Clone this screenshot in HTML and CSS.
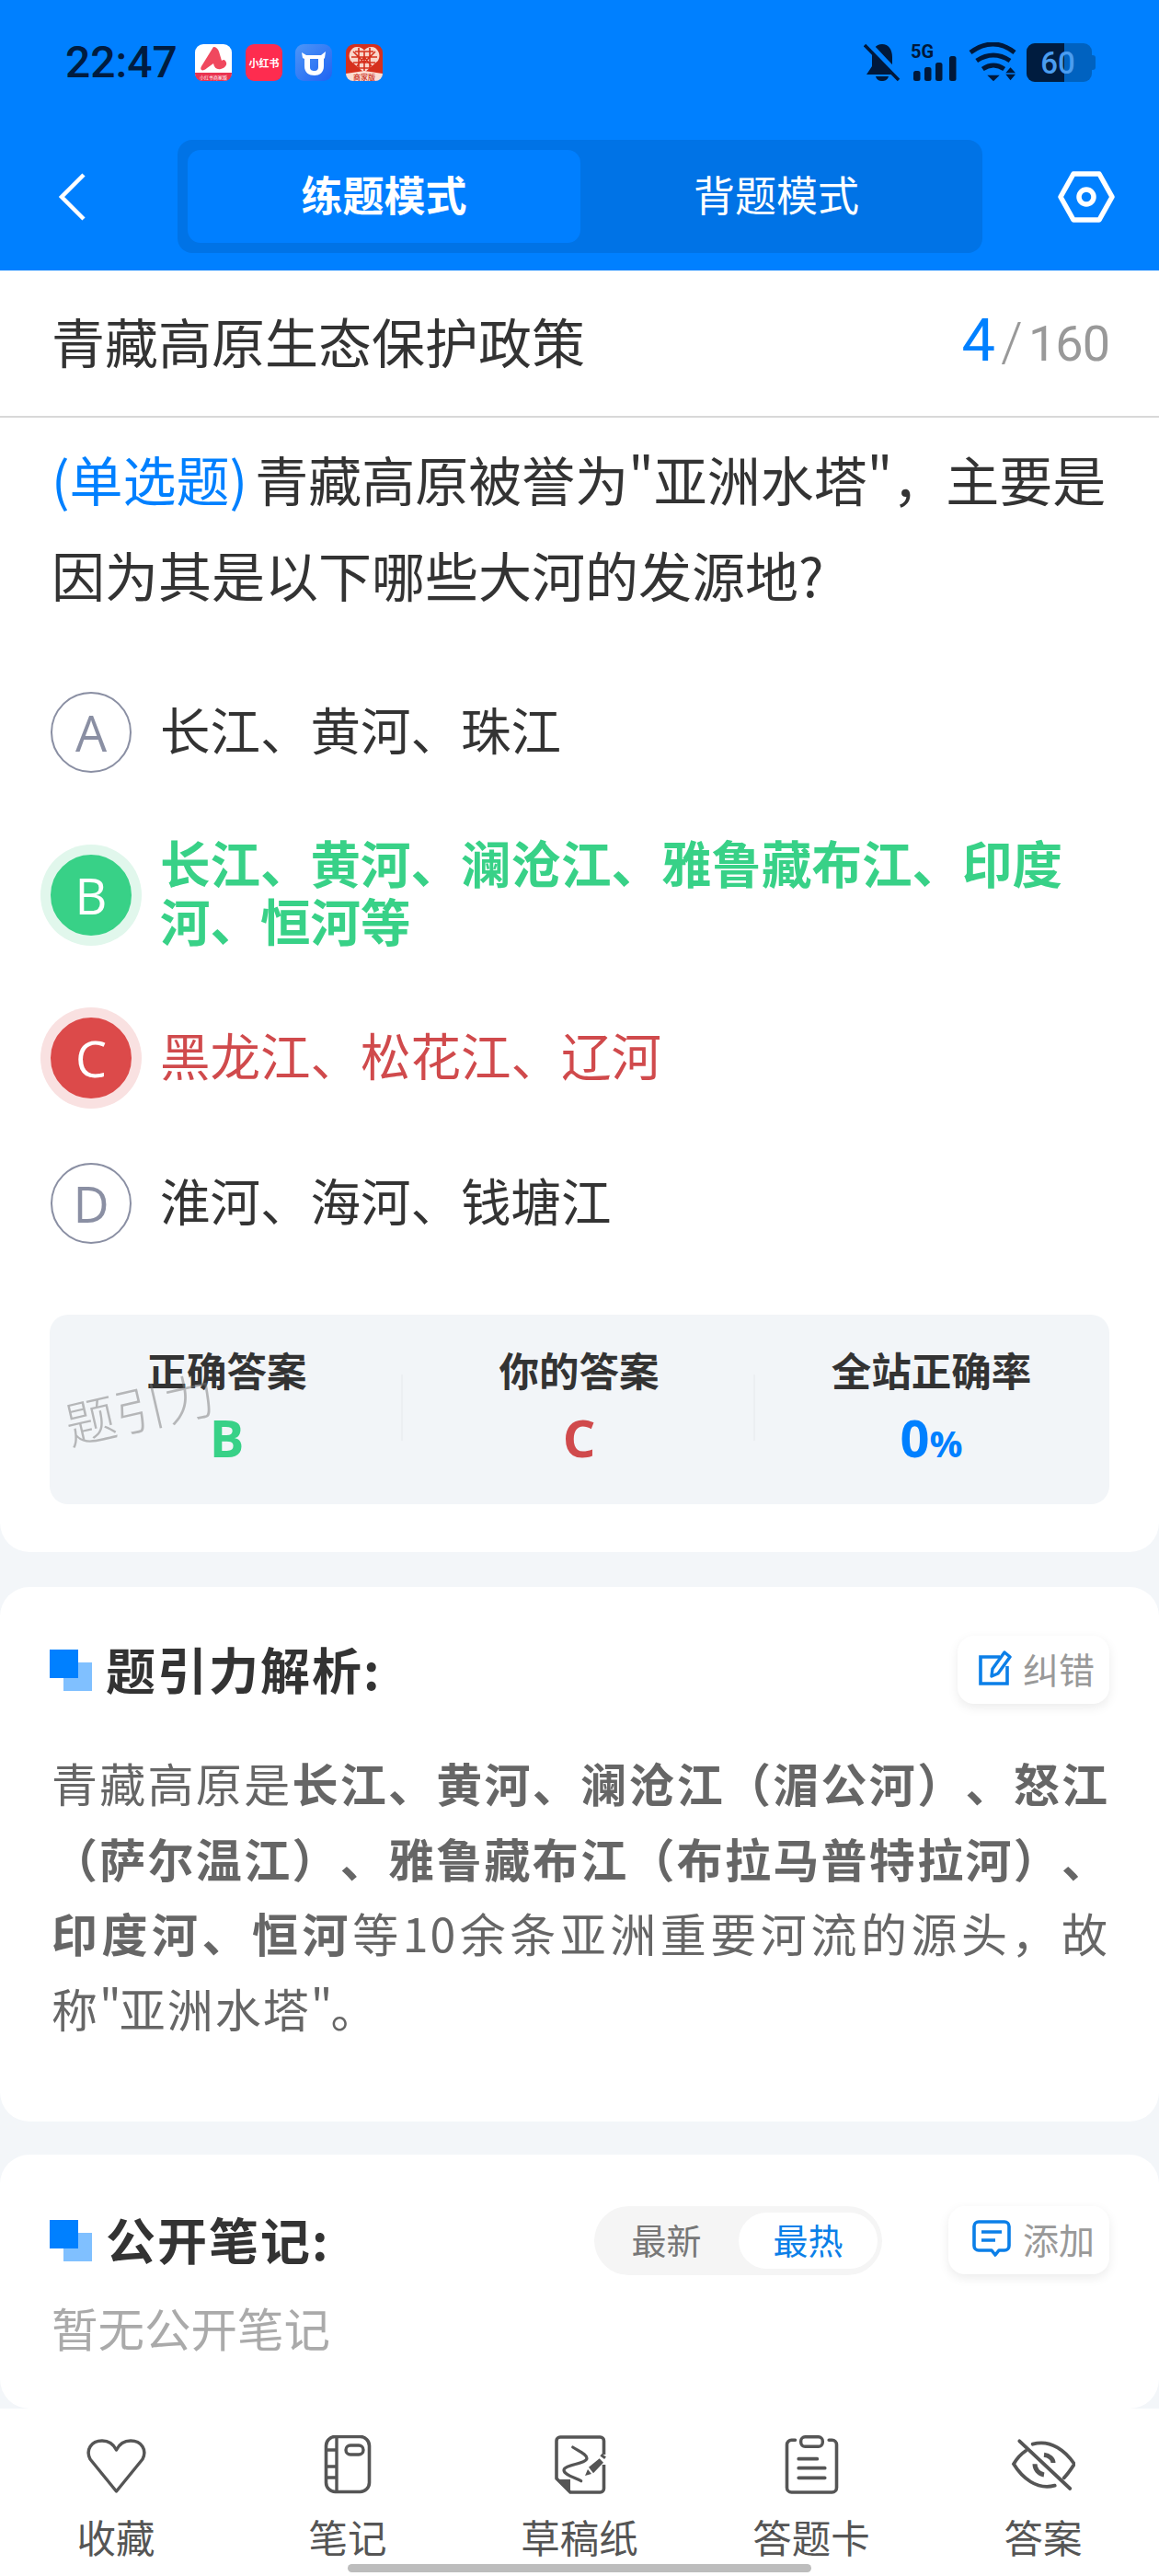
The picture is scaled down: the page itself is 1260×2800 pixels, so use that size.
FILE: index.html
```html
<!DOCTYPE html>
<html lang="zh-CN">
<head>
<meta charset="utf-8">
<title>题引力</title>
<link rel="stylesheet" href="styles.css">
</head>
<body>
<div class="page">
  <header class="top">
    <div class="status">
      <div class="status-left">
        <span class="time">22:47</span>
        <svg class="app" viewBox="0 0 40 40"><rect width="40" height="40" rx="9" fill="#fff"/><path d="M0 31H40V32a8 8 0 0 1-8 8H8a8 8 0 0 1-8-8Z" fill="#ea3350"/><path d="M20 3C23 3 25 5 26 8L29 18C31 16 33 17 34 20 35 23 32 26 28 27 24 28 21 26 20 21L13 26C11 28 8 29 7 28 6 27 6 26 7 24Z" fill="#f0485e"/><text x="20" y="38" class="app-tiny">小红书商家版</text></svg>
        <svg class="app" viewBox="0 0 40 40"><rect width="40" height="40" rx="9" fill="#fe2c4f"/><text x="20" y="24.5" class="app-label">小红书</text></svg>
        <svg class="app" viewBox="0 0 40 40"><defs><linearGradient id="oxbg" x1="0" y1="0" x2="1" y2="1"><stop offset="0" stop-color="#4d96f7"/><stop offset="1" stop-color="#1f63f2"/></linearGradient></defs><rect width="40" height="40" rx="9" fill="url(#oxbg)"/><path d="M7 9 12 12H28L33 8 32 15 31 16V24C31 31 26 34 21 34 15 34 10 31 10 24V16L8 15ZM16 16V25C16 28 18 29 21 29 24 29 25 27 25 25V16Z" fill="#fff" fill-rule="evenodd"/></svg>
        <svg class="app" viewBox="0 0 40 40"><rect width="40" height="40" rx="9" fill="#d6301d"/><path d="M20 31 5 18C1 11 6 3 12 3 16 3 19 5 20 7 21 5 24 3 28 3 34 3 39 11 35 18Z" fill="#f9d6cb"/><path d="M10 8H30M6 14H34M8 20H32M14 26H26M14 4V26M26 4V26M20 8V30M8 8 20 20 32 8M12 24 20 14 28 24" fill="none" stroke="#d6301d" stroke-width="1.6"/><path d="M0 32 20 29 40 32V32a8 8 0 0 1-8 8H8a8 8 0 0 1-8-8Z" fill="#fbdcd2"/><text x="20" y="38.5" class="app-tag">商家版</text></svg>
      </div>
      <div class="status-right">
        <svg class="ico-bell" viewBox="0 0 40 44"><path d="M20 2C27 2 31 8 31 16V26L37 35H3L9 26V16C9 8 13 2 20 2ZM13 37H27C26 41 23 42 20 42 17 42 14 41 13 37Z" fill="#00183a"/><path d="M5 1 40 38" stroke="#0080ff" stroke-width="6"/><path d="M1 3 38 41" stroke="#00183a" stroke-width="3.5"/></svg>
        <svg class="ico-signal" viewBox="0 0 52 44"><text x="0" y="17" class="sig-label">5G</text><rect x="3" y="31" width="7.5" height="11" rx="2.5" fill="#00183a"/><rect x="15" y="27" width="7.5" height="15" rx="2.5" fill="#00183a"/><rect x="27" y="22" width="7.5" height="20" rx="2.5" fill="#00183a"/><rect x="42" y="15" width="7.5" height="27" rx="2.5" fill="#00183a"/></svg>
        <svg class="ico-wifi" viewBox="0 0 54 44"><path d="M2 11Q27 -7 50 11M8.700 20Q27 8 45 20M15.300 29Q27 21 38.700 29" fill="none" stroke="#00183a" stroke-width="5"/><path d="M20.300 35.700H33.700L27 42.300Z" fill="#00183a"/><path d="M45.500 27.300 51 33.300H40.300ZM40.300 34.700H51L45.500 41.300Z" fill="#00183a"/></svg>
        <div class="battery"><span class="batt-fill"></span><span class="batt-num">60</span></div>
      </div>
    </div>
    <div class="nav">
      <svg class="back" viewBox="0 0 30 52"><path d="M28 2 4 26 28 50" fill="none" stroke="#fff" stroke-width="4.500"/></svg>
      <div class="seg">
        <div class="seg-item seg-on">练题模式</div>
        <div class="seg-item">背题模式</div>
      </div>
      <svg class="gear" viewBox="0 0 62 56"><path d="M17 3H45L59 28 45 53H17L3 28Z" fill="none" stroke="#fff" stroke-width="5.500" stroke-linejoin="round"/><circle cx="31" cy="28" r="8" fill="none" stroke="#fff" stroke-width="5.500"/></svg>
    </div>
  </header>

  <main class="main">
    <section class="card card-q">
      <div class="title-row">
        <h1 class="title">青藏高原生态保护政策</h1>
        <div class="count"><span class="count-now">4</span><span class="count-sep">/</span><span class="count-all">160</span></div>
      </div>
      <div class="q-body">
        <p class="question"><span class="q-type">(单选题)</span>青藏高原被誉为"亚洲水塔"，主要是因为其是以下哪些大河的发源地?</p>
        <div class="options">
          <div class="opt"><span class="letter">A</span><span class="opt-text">长江、黄河、珠江</span></div>
          <div class="opt opt-right"><span class="letter">B</span><span class="opt-text">长江、黄河、澜沧江、雅鲁藏布江、印度河、恒河等</span></div>
          <div class="opt opt-wrong"><span class="letter">C</span><span class="opt-text">黑龙江、松花江、辽河</span></div>
          <div class="opt"><span class="letter">D</span><span class="opt-text">淮河、海河、钱塘江</span></div>
        </div>
        <div class="stats">
          <div class="stat"><div class="stat-label">正确答案</div><div class="stat-val val-right">B</div></div>
          <div class="stat"><div class="stat-label">你的答案</div><div class="stat-val val-wrong">C</div></div>
          <div class="stat"><div class="stat-label">全站正确率</div><div class="stat-val val-rate">0<small>%</small></div></div>
          <div class="mark">题引力</div>
        </div>
      </div>
    </section>

    <section class="card card-a">
      <div class="sec-head">
        <span class="sec-ico"></span>
        <h2 class="sec-title">题引力解析:</h2>
        <div class="btn">
          <svg class="btn-ico" viewBox="0 0 36 40"><path d="M23 8H2V37H31V18" fill="none" stroke="#0b7fe8" stroke-width="3.600"/><path d="M14 29 15 21 28 3 34 8 21 26Z" fill="none" stroke="#0b7fe8" stroke-width="3.400" stroke-linejoin="round"/></svg>
          <span>纠错</span>
        </div>
      </div>
      <p class="analysis">青藏高原是<b>长江、黄河、澜沧江（湄公河）、怒江（萨尔温江）、雅鲁藏布江（布拉马普特拉河）、印度河、恒河</b>等10余条亚洲重要河流的源头，故称<span class="quote">"</span>亚洲水塔<span class="quote">"</span>。</p>
    </section>

    <section class="card card-n">
      <div class="sec-head">
        <span class="sec-ico"></span>
        <h2 class="sec-title">公开笔记:</h2>
        <div class="toggle"><span class="tog">最新</span><span class="tog tog-on">最热</span></div>
        <div class="btn btn-add">
          <svg class="btn-ico" viewBox="0 0 44 40"><path d="M8 2H36A5 5 0 0 1 41 7V28A5 5 0 0 1 36 33H30L26 38 22 33H8A5 5 0 0 1 3 28V7A5 5 0 0 1 8 2Z" fill="none" stroke="#0b7fe8" stroke-width="3.600" stroke-linejoin="round"/><path d="M11 13H33M11 22H26" stroke="#0b7fe8" stroke-width="3.600"/></svg>
          <span>添加</span>
        </div>
      </div>
      <p class="empty">暂无公开笔记</p>
    </section>
  </main>

  <footer class="tabs">
    <div class="tab">
      <svg class="tab-ico" viewBox="0 0 70 64"><path d="M35.500 61 7 26C2 16 8 6 20 6 28 6 33 11 35.500 16 38 11 43 6 51 6 63 6 69 16 64 26Z" fill="none" stroke="#555" stroke-width="3.400" stroke-linejoin="round"/></svg>
      <span>收藏</span>
    </div>
    <div class="tab">
      <svg class="tab-ico" viewBox="0 0 70 64"><rect x="11.500" y="1.500" width="47" height="60" rx="10" fill="none" stroke="#555" stroke-width="3.600"/><path d="M23 2V61M11 16H23M11 34H23M11 46H23" stroke="#555" stroke-width="3.400"/><rect x="33" y="11" width="19" height="10" rx="5" fill="none" stroke="#555" stroke-width="3.400"/></svg>
      <span>笔记</span>
    </div>
    <div class="tab">
      <svg class="tab-ico" viewBox="0 0 70 64"><path d="M61.500 21V6A4 4 0 0 0 57.500 2H14A4 4 0 0 0 10 6V47L25 62H57.500A4 4 0 0 0 61.500 58V32" fill="none" stroke="#555" stroke-width="3.600" stroke-linejoin="round"/><path d="M11 48H25V62Z" fill="#555"/><path d="M27.700 13C36 18 43 21 43 25 43 31 18 32 18 38 18 43 30 46 36.700 49.700" fill="none" stroke="#555" stroke-width="3.200" stroke-linecap="round"/><path d="M45 34.700 56.700 25.300 61 29.700 50 41.300ZM41 44 44 37 48 42Z" fill="#555"/><path d="M58.300 21.300 63 24.700" stroke="#555" stroke-width="3.200"/></svg>
      <span>草稿纸</span>
    </div>
    <div class="tab">
      <svg class="tab-ico" viewBox="0 0 70 64"><path d="M18 6.300H14A5 5 0 0 0 9 11.300V58A5 5 0 0 0 14 63H58A5 5 0 0 0 63 58V11.300A5 5 0 0 0 58 6.300H54.700" fill="none" stroke="#555" stroke-width="3.600" stroke-linecap="round" transform="translate(-.5 -1)"/><rect x="23.700" y="1.800" width="23.600" height="10.500" rx="4.500" fill="none" stroke="#555" stroke-width="3.400"/><path d="M21.300 25.700H41.300M21.300 35.700H49.700M21.300 46.300H49.700" stroke="#555" stroke-width="3.800" stroke-linecap="round"/></svg>
      <span>答题卡</span>
    </div>
    <div class="tab">
      <svg class="tab-ico" viewBox="0 0 70 64"><path d="M23.700 9.700C44 4 60 18 69 31.300 66 36 62 42 57.700 46.300M16 17C10 21 6 26 3 31.300 12 46 28 60 47.700 54.700" fill="none" stroke="#555" stroke-width="3.800" stroke-linecap="round"/><path d="M36 21.300C42 22 46 26 46 30M26 31.300C26 37 30 42 36 43" fill="none" stroke="#555" stroke-width="5"/><path d="M9.300 6.300 64.300 58" stroke="#555" stroke-width="3.800" stroke-linecap="round"/></svg>
      <span>答案</span>
    </div>
    <span class="home"></span>
  </footer>
</div>
</body>
</html>
```
FILE: styles.css
```css
* { box-sizing: border-box; }
html, body { margin: 0; padding: 0; }
body { font-family: "Noto Sans CJK SC", "Noto Sans", sans-serif; background: #f3f6f9; color: #333; text-spacing-trim: space-all; }
h1, h2, p { margin: 0; font-weight: normal; }
.page { width: 1260px; height: 2800px; display: flex; flex-direction: column; overflow: hidden; }

/* Header */
.top { height: 294px; background: #0080ff; flex: none; }
.status { height: 152px; padding: 46px 73px 0 71px; display: flex; justify-content: space-between; align-items: flex-start; }
.status-left { display: flex; align-items: center; height: 44px; }
.time { font-family: "Roboto", sans-serif; font-weight: 500; font-size: 48px; line-height: 44px; color: #001c40; width: 141px; }
.app { width: 40px; height: 40px; margin-right: 14.500px; }
.app-label { font-size: 11px; font-weight: 700; fill: #fff; text-anchor: middle; }
.app-tiny { font-size: 5px; fill: #fff; text-anchor: middle; }
.app-tag { font-size: 8px; font-weight: 500; fill: #c9301f; text-anchor: middle; }
.status-right { display: flex; align-items: flex-start; height: 44px; }
.ico-bell { width: 40px; height: 44px; }
.ico-signal { width: 52px; height: 44px; margin-left: 11px; }
.sig-label { font-family: "Roboto", sans-serif; font-size: 20px; font-weight: 700; fill: #00183a; }
.ico-wifi { width: 54px; height: 44px; margin-left: 11px; }
.battery { position: relative; width: 71px; height: 42px; margin-left: 9px; margin-top: 1px; border-radius: 9px; background: #0062c0; display: flex; align-items: center; justify-content: center; }
.batt-fill { position: absolute; left: 0; top: 0; bottom: 0; width: 41px; background: #001c3f; border-radius: 9px 0 0 9px; }
.batt-num { position: relative; font-family: "Roboto", sans-serif; font-size: 33px; font-weight: 500; color: #4a9df0; margin-right: 3px; }
.battery::after { content: ""; position: absolute; right: -4px; top: 13px; width: 4px; height: 16px; background: #0062c0; border-radius: 0 3px 3px 0; }
.nav { display: flex; align-items: center; padding: 0 48px 0 63px; height: 123px; }
.back { width: 30px; height: 52px; flex: none; }
.seg { margin-left: 100px; width: 875px; height: 123px; background: #0073e6; border-radius: 16px; padding: 11px; display: flex; flex: none; }
.seg-item { flex: 1; display: flex; align-items: center; justify-content: center; font-size: 45px; color: #fff; border-radius: 14px; padding-bottom: 6px; }
.seg-on { background: #007fff; font-weight: 700; flex: none; width: 427px; }
.gear { width: 62px; height: 56px; margin-left: 82px; flex: none; }

/* Main */
.main { flex: 1; min-height: 0; overflow: hidden; }
.card { background: #fff; border-radius: 32px; }
.card-q { border-radius: 0 0 32px 32px; height: 1393px; }
.card-a { margin-top: 38px; height: 581px; padding: 53px 54px 0 54px; }
.card-n { margin-top: 36px; height: 276px; padding: 56px 54px 0 54px; }

.title-row { height: 160px; padding: 0 54px 6px 56px; border-bottom: 2px solid #d8d8d8; display: flex; align-items: center; justify-content: space-between; }
.title { font-size: 58px; line-height: 1; color: #333; }
.count { display: flex; align-items: baseline; font-family: "Roboto", sans-serif; color: #999; }
.count-now { font-size: 65px; color: #0080ff; }
.count-sep { font-size: 60px; margin: 0 6px 0 6px; font-weight: 300; }
.count-all { font-size: 54px; letter-spacing: -1px; }

.q-body { padding: 14px 54px 0 54px; }
.question { font-size: 58px; line-height: 104px; color: #333; padding-left: 2px; }
.q-type { color: #0080ff; margin-right: 8px; }
.options { margin-top: 76px; display: flex; flex-direction: column; gap: 70px; }
.opt { display: flex; align-items: center; min-height: 88px; }
.letter { width: 88px; height: 88px; flex: none; border-radius: 50%; border: 2.500px solid #8a8fa3; color: #8a8fa3; display: flex; align-items: center; justify-content: center; font-family: "Open Sans", sans-serif; font-size: 54px; margin-left: 1px; }
.opt-text { margin: -5px 0 5px 31px; font-size: 54.500px; line-height: 63px; color: #333; width: 985px; }
.opt-right .letter { background: #38d187; border-color: #38d187; color: #fff; box-shadow: 0 0 0 11px #e1f7ec; }
.opt-right .opt-text { color: #38d187; font-weight: 700; }
.opt-wrong .letter { background: #dc4a4a; border-color: #dc4a4a; color: #fff; box-shadow: 0 0 0 11px #f9e1e1; }
.opt-wrong .opt-text { color: #d04a4c; }

.stats { position: relative; margin-top: 77px; height: 206px; border-radius: 20px; background: #f2f5f8; display: flex; padding-top: 35px; }
.stat { flex: none; width: 383px; text-align: center; position: relative; padding-left: 2px; }
.stat + .stat::before { content: ""; position: absolute; left: -1px; top: 30px; height: 72px; width: 2px; background: #eceff2; }
.stat-label { font-size: 43.500px; line-height: 50px; font-weight: 700; color: #333; }
.stat-val { font-family: "Open Sans", sans-serif; font-size: 56px; line-height: 76px; font-weight: 700; margin-top: 10px; }
.stat-val small { font-size: 40px; }
.val-right { color: #38d187; }
.val-wrong { color: #d04a4c; }
.val-rate { color: #0080ff; }
.mark { position: absolute; left: 15px; top: 70px; font-size: 55px; line-height: 60px; color: rgba(120, 120, 120, 0.5); font-weight: 300; transform: rotate(-13deg); }

/* Sections */
.sec-head { display: flex; align-items: center; height: 74px; }
.sec-ico { position: relative; width: 46px; height: 45px; flex: none; margin-right: 15px; }
.sec-ico::before { content: ""; position: absolute; left: 15px; top: 14px; width: 31px; height: 31px; background: #80c0ff; }
.sec-ico::after { content: ""; position: absolute; left: 0; top: 0; width: 31px; height: 31px; background: #0080ff; }
.sec-title { font-size: 54px; font-weight: 700; color: #333; line-height: 74px; flex: 1; letter-spacing: 2px; padding-bottom: 3px; }
.btn { height: 74px; width: 165px; flex: none; border-radius: 18px; background: #fff; box-shadow: 0 4px 12px rgba(0, 0, 0, 0.08); display: flex; align-items: center; justify-content: flex-end; padding: 0 16px 4px 0; font-size: 39px; color: #999; gap: 12px; }
.btn-ico { width: 36px; height: 40px; }
.btn-add { width: 175px; margin-left: 72px; }
.btn-add .btn-ico { width: 44px; }
.toggle { width: 313px; height: 75px; border-radius: 38px; background: #f5f5f5; display: flex; align-items: center; padding: 0 5px 0 0; font-size: 38px; color: #777; }
.tog { width: 157px; text-align: center; height: 61px; line-height: 57px; border-radius: 31px; }
.tog-on { width: 151px; background: #fff; color: #0b7fe8; }
.analysis { margin-top: 45px; font-size: 50px; line-height: 81.500px; color: #666; text-align: justify; letter-spacing: 2px; padding-left: 2px; }
.analysis b { font-weight: 700; }
.quote { letter-spacing: -2px; }
.empty { margin-top: 22px; font-size: 50.500px; line-height: 70px; color: #aaa; padding-left: 2px; }

/* Tabs */
.tabs { position: relative; flex: none; height: 182px; background: #fff; display: flex; }
.tab { flex: 1; display: flex; flex-direction: column; align-items: center; padding-top: 29px; font-size: 42.500px; line-height: 58px; color: #555; }
.tab-ico { width: 70px; height: 64px; margin-bottom: 17px; }
.home { position: absolute; left: 378px; top: 169px; width: 504px; height: 9px; border-radius: 5px; background: #bdbdbd; }
```
